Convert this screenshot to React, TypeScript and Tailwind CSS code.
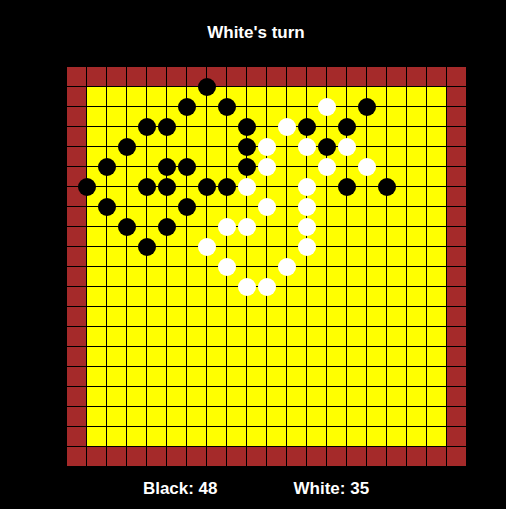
const SIZE = 20;

// [col, row] on grid intersections
const blackStones: [number, number][] = [
  [7, 1], [6, 2], [8, 2], [15, 2], [4, 3], [5, 3], [9, 3], [12, 3], [14, 3],
  [3, 4], [9, 4], [13, 4], [2, 5], [5, 5], [6, 5], [9, 5], [1, 6], [4, 6],
  [5, 6], [7, 6], [8, 6], [14, 6], [16, 6], [2, 7], [6, 7], [3, 8], [5, 8], [4, 9],
];

const whiteStones: [number, number][] = [
  [13, 2], [11, 3], [10, 4], [12, 4], [14, 4], [10, 5], [13, 5], [15, 5],
  [9, 6], [12, 6], [10, 7], [12, 7], [8, 8], [9, 8], [12, 8], [7, 9], [12, 9],
  [8, 10], [11, 10], [9, 11], [10, 11],
];

const Board = () => {
  const cells = [];
  for (let r = 0; r < SIZE; r++) {
    for (let c = 0; c < SIZE; c++) {
      const edge = r === 0 || c === 0 || r === SIZE - 1 || c === SIZE - 1;
      cells.push(
        <div
          key={`${r}-${c}`}
          className={`w-5 h-5 border-l border-t border-black ${edge ? 'bg-[#a52a2a]' : 'bg-[#ffff00]'}`}
        />
      );
    }
  }

  return (
    <div className="relative ml-[66px] w-[400px] h-[400px]">
      <div className="grid grid-cols-[repeat(20,20px)]">{cells}</div>
      {blackStones.map(([c, r]) => (
        <div
          key={`b${c}-${r}`}
          className="absolute w-[18px] h-[18px] rounded-full bg-black"
          style={{ left: c * 20 - 8, top: r * 20 - 8 }}
        />
      ))}
      {whiteStones.map(([c, r]) => (
        <div
          key={`w${c}-${r}`}
          className="absolute w-[18px] h-[18px] rounded-full bg-white"
          style={{ left: c * 20 - 8, top: r * 20 - 8 }}
        />
      ))}
    </div>
  );
};

export default function App() {
  return (
    <div className="w-full h-[509px] bg-black text-white font-['Liberation_Sans',Arial,sans-serif] font-bold text-[17px] leading-[20px] overflow-hidden">
      <div className="pt-[23px] pl-[6px] text-center">White's turn</div>
      <div className="mt-[23px]">
        <Board />
      </div>
      <div className="mt-[13px] pl-[6px] flex justify-center gap-[76px]">
        <span>Black: 48</span>
        <span>White: 35</span>
      </div>
    </div>
  );
}
